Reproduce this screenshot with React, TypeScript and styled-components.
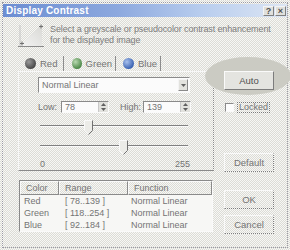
import React from 'react';
import styled, { createGlobalStyle } from 'styled-components';

const Global = createGlobalStyle`
  html, body { margin: 0; padding: 0; }
  body {
    width: 290px; height: 250px; overflow: hidden;
    background: repeating-conic-gradient(#dcdcd6 0 25%, #f7f7f5 0 50%) 0 0 / 2px 2px;
    font-family: "Liberation Sans", Arial, sans-serif;
    font-size: 9px;
    color: #747474;
  }
`;

const Window = styled.div`
  margin: 2px;
  width: 286px;
  height: 246px;
  box-sizing: border-box;
  border: 1px dotted #9a9aa4;
  display: flex;
  flex-direction: column;
`;

const TitleBar = styled.div`
  margin: 1px 0 0 0;
  height: 13px;
  display: flex;
  align-items: center;
  padding-left: 3px;
  background: linear-gradient(90deg, #6b8dd2 0%, #8ca8de 40%, #b8cdee 70%, #dde6f4 100%);
`;

const Title = styled.span`
  flex: 1;
  color: #ffffff;
  font-weight: bold;
  font-size: 10px;
  letter-spacing: 0.2px;
`;

const TitleButton = styled.div`
  width: 11px;
  height: 10px;
  margin-right: 1px;
  box-sizing: border-box;
  border: 1px solid;
  border-color: #f4f4f4 #808080 #808080 #f4f4f4;
  background: #e0e0dc;
  color: #505050;
  font-weight: bold;
  font-size: 9px;
  line-height: 8px;
  text-align: center;
`;

const Header = styled.div`
  display: flex;
  align-items: center;
  padding: 4px 0 0 15px;
  height: 27px;
`;

const Description = styled.div`
  margin-left: 6px;
  line-height: 11px;
  letter-spacing: -0.12px;
  color: #7c7c7c;
`;

const Content = styled.div`
  display: flex;
  margin-top: 8px;
`;

const LeftCol = styled.div`
  width: 196px;
  margin-left: 15px;
  display: flex;
  flex-direction: column;
`;

const Tabs = styled.div`
  display: flex;
  height: 15px;
  padding-left: 7px;
`;

const Tab = styled.div`
  display: flex;
  align-items: center;
  gap: 4px;
  padding: 0 3px 0 0;
  border-right: 1px solid #8c8c8c;
  height: 15px;
  box-sizing: border-box;
  font-size: 9.5px;
`;

const Ball = styled.div<{ $c1: string; $c2: string }>`
  width: 11px;
  height: 11px;
  border-radius: 50%;
  background: radial-gradient(circle at 35% 35%, ${(p) => p.$c1} 0%, ${(p) => p.$c2} 70%);
`;

const Panel = styled.div`
  height: 100px;
  box-sizing: border-box;
  border: 1px solid;
  border-color: #f8f8f8 #8a8a8a #8a8a8a #f8f8f8;
  border-right-style: dotted;
  padding: 5px 0 0 19px;
  display: flex;
  flex-direction: column;
`;

const Combo = styled.div`
  width: 152px;
  height: 16px;
  box-sizing: border-box;
  border: 1px solid;
  border-color: #8a8a8a #fafafa #fafafa #8a8a8a;
  background: #fbfbfb;
  display: flex;
  align-items: center;
  padding-left: 3px;
`;

const ComboText = styled.span`
  flex: 1;
`;

const ArrowBtn = styled.div`
  width: 10px;
  height: 12px;
  box-sizing: border-box;
  border: 1px solid;
  border-color: #f4f4f4 #8a8a8a #8a8a8a #f4f4f4;
  background: #e2e2de;
  display: flex;
  align-items: center;
  justify-content: center;
  margin-right: 1px;
`;

const RangeRow = styled.div`
  display: flex;
  align-items: center;
  margin-top: 8px;
  height: 12px;
`;

const Label = styled.span<{ $w: number }>`
  width: ${(p) => p.$w}px;
`;

const SpinBox = styled.div`
  width: 48px;
  height: 12px;
  box-sizing: border-box;
  border: 1px solid;
  border-color: #8a8a8a #fafafa #fafafa #8a8a8a;
  background: #fbfbfb;
  display: flex;
  align-items: center;
  padding-left: 3px;
`;

const SpinVal = styled.span`
  flex: 1;
`;

const SpinBtns = styled.div`
  width: 9px;
  height: 10px;
  display: flex;
  flex-direction: column;
  border-left: 1px solid #c8c8c8;
  background: #e2e2de;
`;

const SpinHalf = styled.div`
  flex: 1;
  display: flex;
  align-items: center;
  justify-content: center;
`;

const SliderBox = styled.div<{ $mt: number }>`
  position: relative;
  width: 148px;
  height: 15px;
  margin-top: ${(p) => p.$mt}px;
  margin-left: 2px;
`;

const Track = styled.div`
  position: absolute;
  left: 0;
  right: 0;
  top: 5px;
  height: 2px;
  border-top: 1px solid #808080;
  border-bottom: 1px solid #fafafa;
  box-sizing: border-box;
`;

const Thumb = styled.svg`
  position: absolute;
  top: 0;
  width: 9px;
  height: 15px;
`;

const Scale = styled.div`
  display: flex;
  justify-content: space-between;
  width: 150px;
  margin-left: 2px;
  margin-top: 4px;
`;

const ListView = styled.div`
  margin-top: 9px;
  margin-left: 1px;
  width: 194px;
  height: 52px;
  box-sizing: border-box;
  border: 1px solid;
  border-color: #8a8a8a #fafafa #fafafa #8a8a8a;
  background: #f7f7f5;
`;

const Grid = styled.div`
  display: grid;
  grid-template-columns: 39px 69px 1fr;
`;

const HeadCell = styled.div`
  height: 14px;
  box-sizing: border-box;
  border: 1px solid;
  border-color: #fafafa #8a8a8a #8a8a8a #fafafa;
  background: repeating-conic-gradient(#dcdcd6 0 25%, #f7f7f5 0 50%) 0 0 / 2px 2px;
  padding-left: 5px;
  line-height: 12px;
`;

const Cell = styled.div<{ $pl: number }>`
  height: 12px;
  line-height: 13px;
  padding-left: ${(p) => p.$pl}px;
`;

const RightCol = styled.div`
  display: flex;
  flex-direction: column;
  padding-left: 10px;
  position: relative;
`;

const Highlight = styled.div`
  position: absolute;
  left: -9px;
  top: 1px;
  width: 86px;
  height: 38px;
  border-radius: 50%;
  background: #cbcbc3;
`;

const Button = styled.div<{ $mt: number }>`
  position: relative;
  width: 50px;
  height: 19px;
  margin-top: ${(p) => p.$mt}px;
  box-sizing: border-box;
  border: 1px solid;
  border-color: #fafafa #7c7c7c #7c7c7c #fafafa;
  border-right-style: dotted;
  border-bottom-style: dotted;
  background: repeating-conic-gradient(#dcdcd6 0 25%, #f7f7f5 0 50%) 0 0 / 2px 2px;
  display: flex;
  align-items: center;
  justify-content: center;
  font-size: 9.5px;
`;

const AutoButton = styled(Button)`
  background: #e4e4e0;
  border-style: solid;
  color: #505050;
`;

const CheckRow = styled.div`
  position: relative;
  display: flex;
  align-items: center;
  gap: 3px;
  margin-top: 12px;
  margin-left: 1px;
`;

const CheckBox = styled.div`
  width: 9px;
  height: 9px;
  box-sizing: border-box;
  border: 1px solid;
  border-color: #8a8a8a #fafafa #fafafa #8a8a8a;
  background: #fcfcfc;
`;

const Focus = styled.span`
  border: 1px dotted #7a7a7a;
  padding: 0 1px;
  line-height: 9px;
`;

const UpArrow = () => (
  <svg width="5" height="3" viewBox="0 0 5 3"><path d="M0 3 L2.5 0 L5 3 Z" fill="#606060" /></svg>
);
const DownArrow = () => (
  <svg width="5" height="3" viewBox="0 0 5 3"><path d="M0 0 L2.5 3 L5 0 Z" fill="#606060" /></svg>
);

const ThumbShape = ({ left }: { left: number }) => (
  <Thumb viewBox="0 0 9 15" style={{ left }}>
    <path d="M0.5 0.5 H8.5 V10.5 L4.5 14.5 L0.5 10.5 Z" fill="#ecece8" stroke="#fafafa" />
    <path d="M8.5 0.5 V10.5 L4.5 14.5" fill="none" stroke="#707070" />
  </Thumb>
);

const rows = [
  { c: 'Red', r: '[ 78..139 ]', f: 'Normal Linear' },
  { c: 'Green', r: '[ 118..254 ]', f: 'Normal Linear' },
  { c: 'Blue', r: '[ 92..184 ]', f: 'Normal Linear' },
];

const low = 78;
const high = 139;
const trackW = 148;

export default function App() {
  return (
    <>
      <Global />
      <Window>
        <TitleBar>
          <Title>Display Contrast</Title>
          <TitleButton>?</TitleButton>
          <TitleButton>×</TitleButton>
        </TitleBar>
        <Header>
          <svg width="26" height="26" viewBox="0 0 26 26">
            <defs>
              <linearGradient id="tri" x1="0" y1="1" x2="1" y2="0">
                <stop offset="0" stopColor="#f4f4f4" />
                <stop offset="1" stopColor="#d8d8d4" />
              </linearGradient>
            </defs>
            <path d="M2 24 L24 2 L24 24 Z" fill="url(#tri)" />
            <line x1="2" y1="3" x2="2" y2="24" stroke="#c4c4c4" />
            <line x1="0" y1="24.5" x2="26" y2="24.5" stroke="#8a8a8a" />
            <path d="M21 4.5 H25 M23 2.5 V6.5" stroke="#707070" />
            <path d="M2 21.5 H6 M4 19.5 V23.5" stroke="#707070" />
          </svg>
          <Description>
            Select a greyscale or pseudocolor contrast enhancement
            <br />
            for the displayed image
          </Description>
        </Header>
        <Content>
          <LeftCol>
            <Tabs>
              <Tab style={{ width: 39 }}>
                <Ball $c1="#9a9a9a" $c2="#4a4a4a" />
                Red
              </Tab>
              <Tab style={{ width: 52, paddingLeft: 8 }}>
                <Ball $c1="#b8d8b0" $c2="#4f8a4a" />
                Green
              </Tab>
              <Tab style={{ width: 45, paddingLeft: 7 }}>
                <Ball $c1="#a8c0ec" $c2="#3c64b4" />
                Blue
              </Tab>
            </Tabs>
            <Panel>
              <Combo>
                <ComboText>Normal Linear</ComboText>
                <ArrowBtn>
                  <DownArrow />
                </ArrowBtn>
              </Combo>
              <RangeRow>
                <Label $w={23}>Low:</Label>
                <SpinBox>
                  <SpinVal>78</SpinVal>
                  <SpinBtns>
                    <SpinHalf><UpArrow /></SpinHalf>
                    <SpinHalf><DownArrow /></SpinHalf>
                  </SpinBtns>
                </SpinBox>
                <Label $w={11} />
                <Label $w={23}>High:</Label>
                <SpinBox>
                  <SpinVal>139</SpinVal>
                  <SpinBtns>
                    <SpinHalf><UpArrow /></SpinHalf>
                    <SpinHalf><DownArrow /></SpinHalf>
                  </SpinBtns>
                </SpinBox>
              </RangeRow>
              <SliderBox $mt={7}>
                <Track />
                <ThumbShape left={Math.round((low / 255) * trackW) - 1} />
              </SliderBox>
              <SliderBox $mt={5}>
                <Track />
                <ThumbShape left={Math.round((high / 255) * trackW) - 2} />
              </SliderBox>
              <Scale>
                <span>0</span>
                <span>255</span>
              </Scale>
            </Panel>
            <ListView>
              <Grid>
                <HeadCell>Color</HeadCell>
                <HeadCell>Range</HeadCell>
                <HeadCell>Function</HeadCell>
                {rows.map((r) => (
                  <React.Fragment key={r.c}>
                    <Cell $pl={4}>{r.c}</Cell>
                    <Cell $pl={6}>{r.r}</Cell>
                    <Cell $pl={3}>{r.f}</Cell>
                  </React.Fragment>
                ))}
              </Grid>
            </ListView>
          </LeftCol>
          <RightCol>
            <Highlight />
            <AutoButton $mt={15}>Auto</AutoButton>
            <CheckRow>
              <CheckBox />
              <Focus>Locked</Focus>
            </CheckRow>
            <Button $mt={40}>Default</Button>
            <Button $mt={18}>OK</Button>
            <Button $mt={6}>Cancel</Button>
          </RightCol>
        </Content>
      </Window>
    </>
  );
}
